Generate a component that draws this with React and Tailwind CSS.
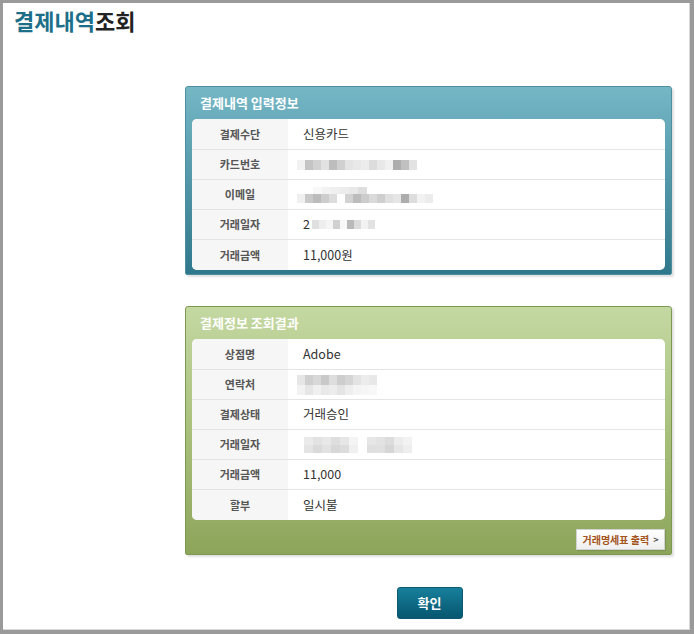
import React from "react";

const FONT = { fontFamily: '"Noto Sans CJK KR", "Noto Sans", sans-serif' };

function Mosaic({ rows, w = 8, h = 10, className = "" }) {
  return (
    <div className={"flex flex-col " + className}>
      {rows.map((r, i) => (
        <div key={i} className="flex">
          {r.map((c, j) => (
            <div key={j} style={{ width: w, height: h, background: c }} />
          ))}
        </div>
      ))}
    </div>
  );
}

function Row({ label, children, last, first }) {
  return (
    <div
      className={
        "flex " +
        (first ? "h-[31px] " : "h-[30px] ") +
        (last ? "" : "border-b border-[#e4e4e4]")
      }
    >
      <div className="w-[96px] shrink-0 bg-[#f6f6f6] flex items-center justify-center text-[11px] font-bold text-[#555]">
        {label}
      </div>
      <div className="flex-1 flex items-center pl-[15px] text-[12.5px] text-[#333]">
        {children}
      </div>
    </div>
  );
}

function Panel({ title, variant, height, children, footer }) {
  const teal = variant === "teal";
  return (
    <div
      className={
        "w-[487px] rounded-t-[3px] rounded-b-[2px] border flex flex-col shadow-[2px_2px_2px_rgba(0,0,0,0.12)] " +
        (teal
          ? "border-[#4d8e9f] bg-gradient-to-b from-[#75b7c5] to-[#2f788c]"
          : "border-[#7d9850] bg-gradient-to-b from-[#c4d8a2] via-[#a9c07c] to-[#8ca55a]")
      }
      style={{ height }}
    >
      <div className="h-[32px] flex items-center pl-[14px] text-white font-bold text-[13px]">
        {title}
      </div>
      <div className="mx-[6px] bg-white rounded-[5px] overflow-hidden">{children}</div>
      {footer}
    </div>
  );
}

export default function App() {
  return (
    <div
      className="w-[694px] h-[634px] bg-[#9a9a9a] pl-[3px] pt-[3px] pr-[4px] pb-[4px] box-border"
      style={FONT}
    >
      <div className="w-full h-full bg-white border-r border-b border-[#d8d8d8] flex flex-col">
        <div className="h-[83px] pl-[11px] pt-[2px]">
          <div className="text-[22px] font-bold leading-[30px]">
            <span className="text-[#1d6f89]">결제내역</span>
            <span className="text-[#222]">조회</span>
          </div>
        </div>

        <div className="ml-[182px] flex flex-col">
          <Panel title="결제내역 입력정보" variant="teal" height={189}>
            <Row label="결제수단" first>신용카드</Row>
            <Row label="카드번호">
              <Mosaic
                className="-ml-[6px]"
                rows={[
                  ["#f2f2f2", "#c4c4c4", "#d2d2d2", "#e2e2e2", "#bdbdbd", "#d0d0d0", "#e4e4e4", "#e8e8e8", "#ececec", "#dcdcdc", "#e8e8e8", "#f0f0f0", "#adadad", "#c0c0c0", "#e2e2e2"],
                ]}
              />
            </Row>
            <Row label="이메일">
              <div className="-ml-[6px] flex flex-col">
                <Mosaic
                  className="ml-[16px]"
                  w={9}
                  h={7}
                  rows={[["#f8f8f8", "#f2f2f2", "#efefef", "#ececec", "#e8e8e8", "#dedede"]]}
                />
                <Mosaic
                  h={9}
                  rows={[
                    ["#f0f0f0", "#c9c9c9", "#bcbcbc", "#cdcdcd", "#dddddd", "#ffffff", "#d2d2d2", "#bcbcbc", "#cccccc", "#dadada", "#cfcfcf", "#e0e0e0", "#e6e6e6", "#adadad", "#dddddd", "#f2f2f2", "#ececec"],
                  ]}
                />
              </div>
            </Row>
            <Row label="거래일자">
              <span>2</span>
              <Mosaic
                className="ml-[2px]"
                w={7}
                h={9}
                rows={[["#e0e0e0", "#eeeeee", "#f5f5f5", "#d0d0d0", "#f8f8f8", "#b9b9b9", "#dcdcdc", "#f2f2f2", "#e2e2e2"]]}
              />
            </Row>
            <Row label="거래금액" last>
              11,000원
            </Row>
          </Panel>

          <div className="h-[31px]" />

          <Panel
            title="결제정보 조회결과"
            variant="green"
            height={249}
            footer={
              <div className="flex justify-end pr-[6px] pt-[9px]">
                <div className="h-[21px] w-[89px] border border-[#d2d2d2] bg-gradient-to-b from-white to-[#efefef] flex items-center justify-center gap-[4px] text-[10px] font-bold text-[#a4531b] shadow-[1px_1px_1px_rgba(0,0,0,0.1)]">
                  <span>거래명세표 출력</span>
                  <span className="text-[9px] text-[#555]">{">"}</span>
                </div>
              </div>
            }
          >
            <Row label="상점명" first>Adobe</Row>
            <Row label="연락처">
              <div className="-ml-[6px] flex flex-col">
                <Mosaic
                  w={8}
                  h={10}
                  rows={[
                    ["#e6e6e6", "#cfcfcf", "#d8d8d8", "#c8c8c8", "#dddddd", "#cdcdcd", "#d5d5d5", "#e3e3e3", "#ececec", "#e8e8e8"],
                    ["#f2f2f2", "#e6e6e6", "#f0f0f0", "#e8e8e8", "#ececec", "#e4e4e4", "#eeeeee", "#f4f4f4", "#f6f6f6", "#f8f8f8"],
                  ]}
                />
              </div>
            </Row>
            <Row label="결제상태">거래승인</Row>
            <Row label="거래일자">
              <div className="flex items-center gap-[9px] ml-[1px]">
                <Mosaic
                  w={9}
                  h={8}
                  rows={[
                    ["#eaeaea", "#e2e2e2", "#e8e8e8", "#dedede", "#e6e6e6", "#f4f4f4"],
                    ["#e4e4e4", "#dadada", "#e2e2e2", "#d8d8d8", "#dcdcdc", "#f0f0f0"],
                  ]}
                />
                <Mosaic
                  w={9}
                  h={8}
                  rows={[
                    ["#e6e6e6", "#e2e2e2", "#dcdcdc", "#ececec", "#f2f2f2"],
                    ["#dfdfdf", "#e0e0e0", "#d6d6d6", "#e6e6e6", "#eeeeee"],
                  ]}
                />
              </div>
            </Row>
            <Row label="거래금액">11,000</Row>
            <Row label="할부" last>
              일시불
            </Row>
          </Panel>

          <div className="flex justify-center w-[487px] mt-[32px]">
            <div className="ml-[2px] w-[66px] h-[32px] rounded-[3px] bg-gradient-to-b from-[#17809c] to-[#07566f] border border-[#0b5a72] flex items-center justify-center text-white font-bold text-[13px]">
              확인
            </div>
          </div>
        </div>
      </div>
    </div>
  );
}
